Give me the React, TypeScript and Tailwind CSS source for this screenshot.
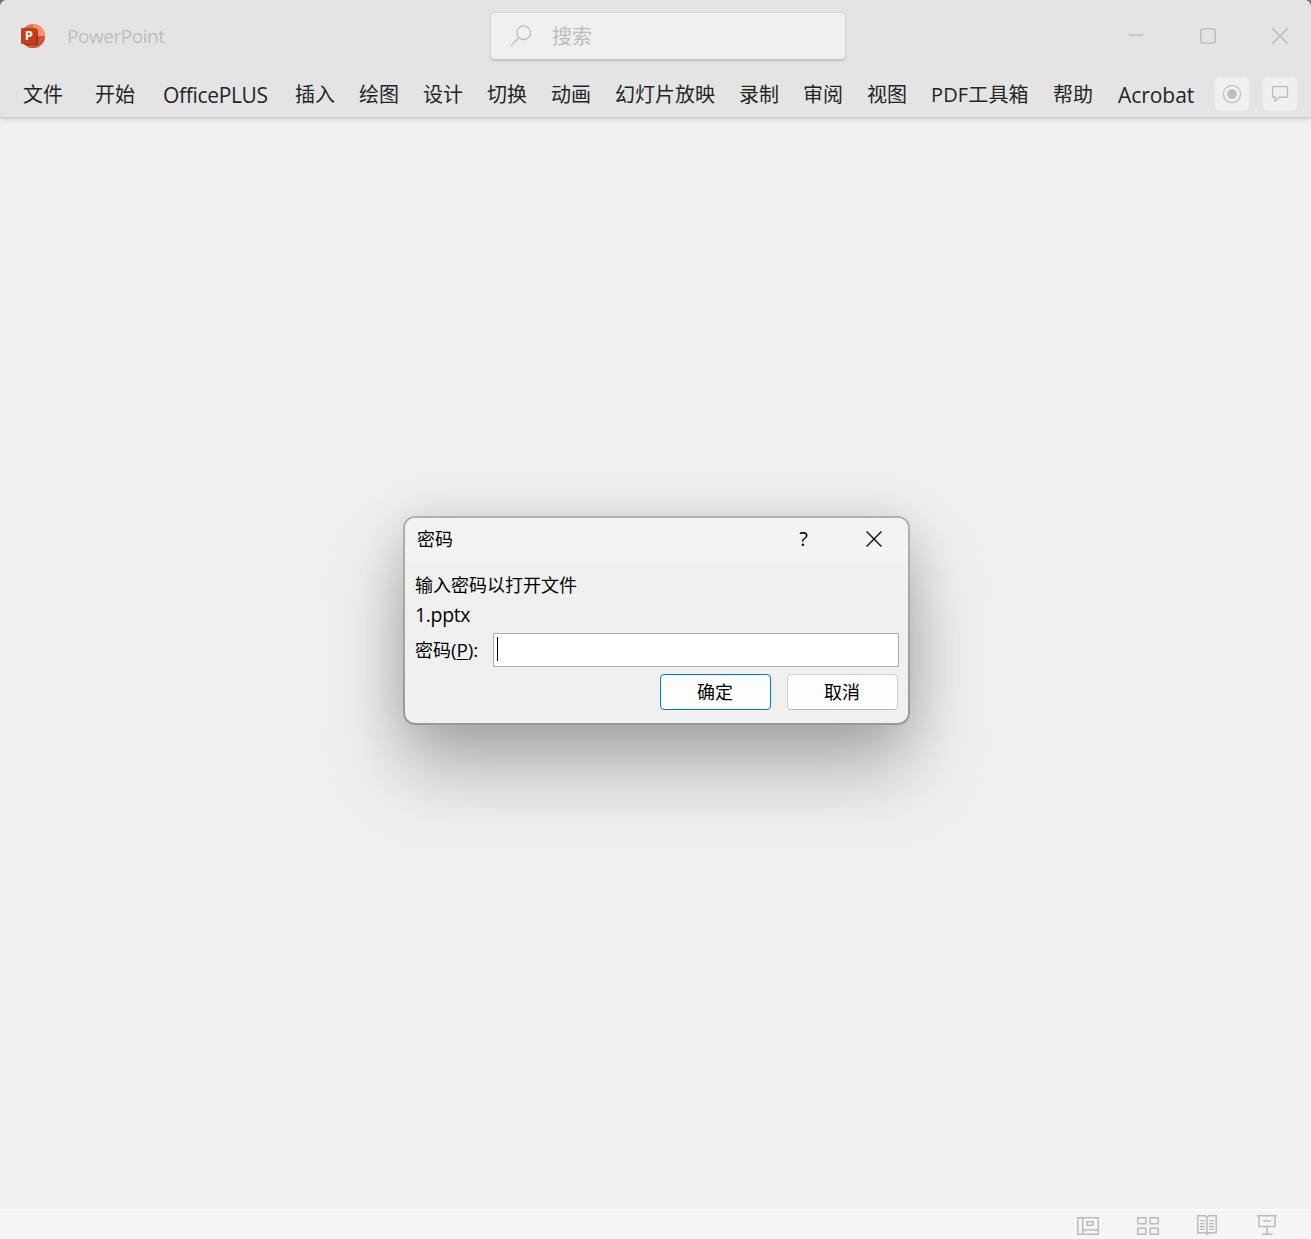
import React from "react";

const tabs: { label: string; box: string }[] = [
  { label: "文件", box: "w-10 mr-8" },
  { label: "开始", box: "w-10 mr-[27px]" },
  { label: "OfficePLUS", box: "w-[106px] mr-[27px] pl-px text-[21px] tracking-[-0.33px]" },
  { label: "插入", box: "w-10 mr-6" },
  { label: "绘图", box: "w-10 mr-6" },
  { label: "设计", box: "w-10 mr-6" },
  { label: "切换", box: "w-10 mr-6" },
  { label: "动画", box: "w-10 mr-6" },
  { label: "幻灯片放映", box: "w-[100px] mr-6" },
  { label: "录制", box: "w-10 mr-6" },
  { label: "审阅", box: "w-10 mr-6" },
  { label: "视图", box: "w-10 mr-6" },
  { label: "PDF工具箱", box: "w-[98px] mr-6 tracking-[0.15px]" },
  { label: "帮助", box: "w-10 mr-6" },
  { label: "Acrobat", box: "w-[78px] mr-5 pl-px text-[21px] tracking-[-0.05px]" },
];

function PowerPointLogo() {
  return (
    <svg width="26" height="26" viewBox="0 0 26 26" className="shrink-0">
      <defs>
        <clipPath id="disc">
          <circle cx="13" cy="13" r="12" />
        </clipPath>
      </defs>
      <g clipPath="url(#disc)">
        <rect width="26" height="26" fill="#ed6c47" />
        <rect x="13" width="13" height="13" fill="#ff8f6b" />
        <rect y="13" width="26" height="13" fill="#d35230" />
        <rect x="1" y="6" width="17" height="16" rx="1.5" fill="#5e2010" opacity="0.65" />
      </g>
      <rect x="1" y="5" width="15.6" height="16" rx="1.2" fill="#c43e1c" />
      <text
        x="8.8"
        y="17.4"
        textAnchor="middle"
        fontSize="13"
        fontWeight="700"
        fill="#fff"
        fontFamily="'Open Sans', sans-serif"
      >
        P
      </text>
    </svg>
  );
}

function TitleBar() {
  return (
    <div className="flex h-[72px] items-center">
      <div className="ml-5 flex w-[470px] items-center">
        <PowerPointLogo />
        <span className="ml-[21px] text-[19px] leading-6 tracking-[-0.45px] text-[#bebebe]">PowerPoint</span>
      </div>
      <div className="flex h-[48px] w-[356px] items-center rounded-[5px] border border-[#d8d8d8] border-b-[#c6c6c6] bg-[#f0f0f0] shadow-[0_1px_2px_rgba(0,0,0,0.16)]">
        <svg width="24" height="24" viewBox="0 0 24 24" fill="none" stroke="#bdbdbd" strokeWidth="1.3" className="ml-[18px]">
          <circle cx="14.7" cy="8.7" r="6.8" />
          <path d="M9.9 13.5 2 21.8" />
        </svg>
        <span className="ml-[19px] pt-px text-[20px] leading-6 text-[#bdbdbd]">搜索</span>
      </div>
      <div className="ml-auto mr-[23px] flex items-center gap-14 text-[#bdbdbd]">
        <svg width="16" height="16" viewBox="0 0 16 16" fill="none" stroke="currentColor" strokeWidth="1.4">
          <path d="M.5 7.2h15" />
        </svg>
        <svg width="16" height="16" viewBox="0 0 16 16" fill="none" stroke="currentColor" strokeWidth="1.5">
          <rect x=".9" y=".9" width="14.2" height="14.2" rx="1.5" />
        </svg>
        <svg width="16" height="16" viewBox="0 0 16 16" fill="none" stroke="currentColor" strokeWidth="1.5">
          <path d="M.5.5l15 15M15.5.5l-15 15" />
        </svg>
      </div>
    </div>
  );
}

function MenuBar() {
  return (
    <div className="flex h-11 items-center pl-[23px] text-[20px] leading-[30px] text-[#242424]">
      <div className="flex pt-[2px]">
        {tabs.map((tab) => (
          <span key={tab.label} className={"shrink-0 whitespace-nowrap " + tab.box}>
            {tab.label}
          </span>
        ))}
      </div>
      <div className="flex shrink-0 gap-[14px] text-[#bdbdbd]">
        <button className="flex size-[34px] items-center justify-center rounded-[5px] bg-[#f0f0f0]">
          <svg width="20" height="20" viewBox="0 0 20 20" fill="none" stroke="currentColor" strokeWidth="1.2">
            <circle cx="10" cy="10" r="8.6" />
            <circle cx="10" cy="10" r="4.8" fill="currentColor" stroke="none" />
          </svg>
        </button>
        <button className="flex size-[34px] items-center justify-center rounded-[5px] bg-[#f0f0f0]">
          <svg width="18" height="18" viewBox="0 0 18 18" fill="none" stroke="currentColor" strokeWidth="1.4">
            <path d="M1.6 1.6h14.8v10.6H8.2L4.2 16v-3.8H1.6z" />
          </svg>
        </button>
      </div>
    </div>
  );
}

function PasswordDialog() {
  return (
    <div className="h-[209px] w-[507px] rounded-[12px] bg-[linear-gradient(#b0b0b0,#989898)] p-[2px] text-[18px] leading-[26px] text-black shadow-[0_44px_76px_rgba(0,0,0,0.27),0_4px_50px_rgba(0,0,0,0.12)]">
      <div className="h-full overflow-hidden rounded-[10px] bg-[#f0f0f0]">
        <div className="flex h-[43px] items-center bg-[#f3f3f3] pb-[2px] pl-3">
          <span className="leading-[24px]">密码</span>
          <span className="ml-auto w-[14px] text-center text-[20px]">?</span>
          <svg width="16" height="16" viewBox="0 0 16 16" fill="none" stroke="#111" strokeWidth="1.4" className="ml-[55px] mr-[26.5px]">
            <path d="M.6.6l14.8 14.8M15.4.6.6 15.4" />
          </svg>
        </div>
        <div className="flex flex-col px-[9px] pt-[11px]">
          <div className="h-[30px] pl-px">输入密码以打开文件</div>
          <div className="h-[31px] pl-px text-[19.5px] tracking-[-0.35px]">1.pptx</div>
          <div className="flex h-[34px] items-center">
            <label className="w-[79px] pl-px">
              密码<span className="text-[19px] tracking-[-0.1px]">(<u className="decoration-1 underline-offset-2">P</u>):</span>
            </label>
            <div className="flex h-[34px] w-[406px] items-start border border-[#abadb3] bg-white pl-[3px] pt-[3px]">
              <div className="h-6 w-px bg-black" />
            </div>
          </div>
          <div className="mr-px mt-[7px] flex justify-end gap-4">
            <button className="h-9 w-[111px] rounded-[4px] border border-[#0078d4] bg-[#fdfdfd] pr-px">确定</button>
            <button className="h-9 w-[111px] rounded-[4px] border border-[#d0d0d0] border-b-[#bbb] bg-[#fdfdfd] pr-px">取消</button>
          </div>
        </div>
      </div>
    </div>
  );
}

function StatusBar() {
  return (
    <div className="flex h-[30px] items-center justify-end gap-9 border-t border-white bg-[#f5f5f5] pr-8 pt-px text-[#bbb]">
      <svg width="24" height="24" viewBox="0 0 24 24" fill="none" stroke="currentColor" strokeWidth="1.5">
        <path d="M2.8 4.8h20.4v16.4H2.8zM7.7 4.8v16.4M7.7 17h15.5M12 8.8h6v3.5h-6z" />
      </svg>
      <svg width="24" height="24" viewBox="0 0 24 24" fill="none" stroke="currentColor" strokeWidth="1.5">
        <path d="M2.8 4.8h8v6h-8zM15.2 4.8h8v6h-8zM2.8 15.2h8v6h-8zM15.2 15.2h8v6h-8z" />
      </svg>
      <svg width="24" height="24" viewBox="0 0 24 24" fill="none" stroke="currentColor" strokeWidth="1.5">
        <path d="M12 4.5 10.4 2.8H2.8v17h7.6l1.6 1.5 1.6-1.5h7.6v-17h-7.6zM12 4.5v16.8" />
        <path d="M5 7.7h4.7M5 10.6h4.7M5 13.5h4.7M5 16.4h4.7M14.3 7.7H19M14.3 10.6H19M14.3 13.5H19M14.3 16.4H19" strokeWidth="1.3" />
      </svg>
      <svg width="24" height="24" viewBox="0 0 24 24" fill="none" stroke="currentColor" strokeWidth="1.5">
        <path d="M2 2.8h20M4 2.8v10.6h16V2.8M8 8h8M12 13.4v7.8M7 21.2h10.5" />
      </svg>
    </div>
  );
}

export default function App() {
  return (
    <div className="flex h-[1239px] w-[1311px] flex-col overflow-hidden bg-[#787878] font-['Open_Sans','Noto_Sans_CJK_SC',sans-serif]">
      <div className="flex min-h-0 flex-1 flex-col rounded-t-[7px] bg-[#f0f0f0]">
        <header className="z-10 h-[117px] shrink-0 rounded-t-[7px] bg-[#e4e4e4] shadow-[0_1px_1px_#cbcbcb,0_2px_5px_rgba(0,0,0,0.14)]">
          <TitleBar />
          <MenuBar />
        </header>
        <main className="flex flex-1 justify-center pl-[2px] pt-[399px]">
          <PasswordDialog />
        </main>
        <StatusBar />
      </div>
    </div>
  );
}
